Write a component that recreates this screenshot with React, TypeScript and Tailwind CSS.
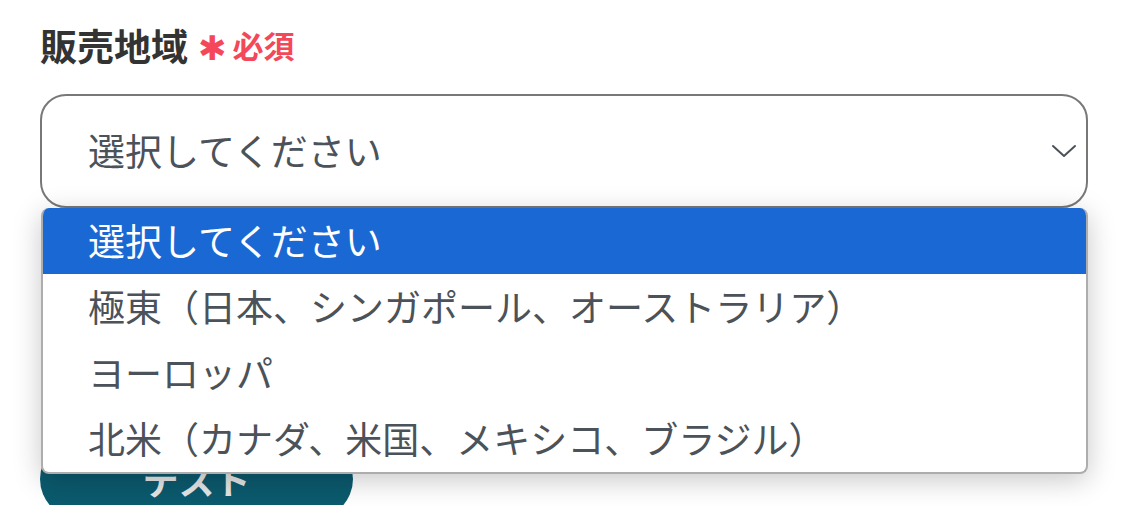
const OPTIONS = [
  '選択してください',
  '極東（日本、シンガポール、オーストラリア）',
  'ヨーロッパ',
  '北米（カナダ、米国、メキシコ、ブラジル）',
]

const FONT = 'font-["Noto_Sans_CJK_JP","Noto_Sans",sans-serif]'

export default function App() {
  return (
    <div className={`h-[505px] w-[1125px] overflow-hidden bg-white pl-[40px] pr-[37px] pt-[18px] ${FONT}`}>
      {/* Label */}
      <div className="flex items-center gap-[10px] leading-[54px]">
        <span className="text-[37px] font-bold text-[#333333]">販売地域</span>
        <span className="flex items-center gap-[6px] text-[#f4485a]">
          <span className="relative top-[3px] font-['DejaVu_Sans',sans-serif] text-[34px] leading-none">✱</span>
          <span className="text-[31px] font-bold">必須</span>
        </span>
      </div>

      {/* Select with open list */}
      <div className="relative mt-[22px]">
        <div className="flex h-[114px] items-center justify-between rounded-[26px] border-2 border-[#787878] bg-white pl-[46px] pr-[8px]">
          <span className="text-[37px] text-[#4b5259]">選択してください</span>
          <svg width="26" height="14" viewBox="0 0 26 14" fill="none" className="mr-[1px]">
            <path d="M2 2 L13 12 L24 2" stroke="#4b5259" strokeWidth="2" strokeLinecap="round" strokeLinejoin="round" />
          </svg>
        </div>

        <ul className="absolute left-[1px] right-0 top-full z-10 overflow-hidden rounded-[8px] border-2 border-t-0 border-[#adadad] bg-white shadow-[0_6px_28px_rgba(0,0,0,0.22)]">
          {OPTIONS.map((label, i) => (
            <li
              key={label}
              className={`flex h-[66px] items-center pl-[45px] text-[37px] ${
                i === 0 ? 'bg-[#1a68d4] text-white' : 'text-[#4b5259]'
              }`}
            >
              {label}
            </li>
          ))}
        </ul>
      </div>

      {/* Button partly hidden behind the list */}
      <button
        type="button"
        className="mt-[231px] flex h-[80px] w-[313px] items-center justify-center rounded-full bg-[#0b5a6e] text-[36px] font-bold text-[#e6e6e6]"
      >
        テスト
      </button>
    </div>
  )
}
